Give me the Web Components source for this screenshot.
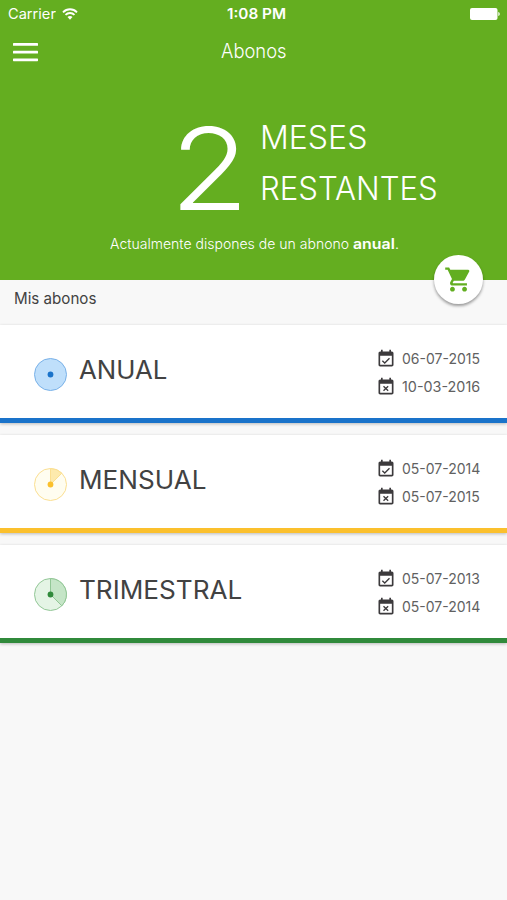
<!DOCTYPE html>
<html lang="es">
<head>
<meta charset="utf-8">
<title>Abonos</title>
<style>
html, body {
  margin: 0;
  height: 100%;
  background: #f8f8f8;
}
</style>
</head>
<body>
<abonos-page></abonos-page>
<script>
// Text stretched horizontally to a fixed width (the brand face is extended)
class WideText extends HTMLElement {
  constructor() {
    super();
    this.attachShadow({ mode: "open" }).innerHTML = `
<style>
:host {
  display: block;
  flex: none;
  white-space: nowrap;
}
span {
  display: inline-block;
  transform-origin: 0 50%;
}
</style>
<span><slot></slot></span>`;
  }
  connectedCallback() {
    const width = Number(this.getAttribute("width"));
    const span = this.shadowRoot.querySelector("span");
    this.style.width = width + "px";
    span.style.transform = `scaleX(${width / span.offsetWidth})`;
  }
}

class StatusBar extends HTMLElement {
  constructor() {
    super();
    this.attachShadow({ mode: "open" }).innerHTML = `
<style>
:host {
  box-sizing: border-box;
  display: grid;
  grid-template-columns: 1fr auto 1fr;
  align-items: center;
  height: 27px;
  padding: 0 7px 0 8px;
  font-size: 14px;
  line-height: 27px;
}
.left {
  display: flex;
  align-items: center;
  gap: 6px;
}
.time {
  margin-left: 4px;
  font-weight: 600;
}
.battery {
  justify-self: end;
}
</style>
<div class="left">
  <wide-text width="48">Carrier</wide-text>
  <svg width="16" height="12" viewBox="0 0 16 12" fill="none" stroke="#fff" stroke-width="1.9">
    <path d="M1 4.3C5 .3 11 .3 15 4.3"></path>
    <path d="M3.5 6.8C6 4.3 10 4.3 12.5 6.8"></path>
    <path d="M8 11.7L5.5 9.1C6.9 7.7 9.1 7.7 10.5 9.1Z" fill="#fff" stroke="none"></path>
  </svg>
</div>
<wide-text class="time" width="59">1:08 PM</wide-text>
<svg class="battery" width="30" height="12" viewBox="0 0 30 12" fill="#fff">
  <rect x="0" y="0" width="27.5" height="12" rx="2"></rect>
  <path d="M28.3 4C30.2 4.4 30.2 7.6 28.3 8Z"></path>
</svg>`;
  }
}

class NavBar extends HTMLElement {
  constructor() {
    super();
    this.attachShadow({ mode: "open" }).innerHTML = `
<style>
:host {
  box-sizing: border-box;
  display: grid;
  grid-template-columns: 1fr auto 1fr;
  align-items: center;
  height: 48px;
  padding: 0 13px;
  font-size: 19.5px;
  font-weight: 350;
  line-height: 47px;
}
svg {
  margin-top: 3px;
}
</style>
<svg width="25" height="19" viewBox="0 0 25 19" fill="#fff">
  <rect y="0" width="25" height="2.8" rx=".6"></rect>
  <rect y="7.7" width="25" height="2.8" rx=".6"></rect>
  <rect y="15.4" width="25" height="2.8" rx=".6"></rect>
</svg>
<wide-text width="66"><slot></slot></wide-text>`;
  }
}

class RemainingSummary extends HTMLElement {
  constructor() {
    super();
    this.attachShadow({ mode: "open" }).innerHTML = `
<style>
:host {
  display: block;
}
.count {
  display: flex;
  align-items: center;
  gap: 11px;
  height: 102px;
  padding: 37px 0 0 170px;
}
.number {
  font-size: 114px;
  font-weight: 360;
  line-height: 102px;
  margin-top: 11px;
}
.unit {
  font-size: 32px;
  font-weight: 320;
  line-height: 51px;
}
.note {
  display: flex;
  padding: 19px 0 0 110px;
  font-size: 14.5px;
  font-weight: 300;
  line-height: 22px;
}
.note b {
  font-weight: 600;
}
</style>
<div class="count">
  <wide-text class="number" width="79">2</wide-text>
  <div class="unit">
    <wide-text width="107">MESES</wide-text>
    <wide-text width="178">RESTANTES</wide-text>
  </div>
</div>
<div class="note">
  <wide-text width="243">Actualmente dispones de un abnono&nbsp;</wide-text>
  <wide-text width="46"><b>anual</b>.</wide-text>
</div>`;
  }
}

class CartButton extends HTMLElement {
  constructor() {
    super();
    this.attachShadow({ mode: "open" }).innerHTML = `
<style>
:host {
  display: flex;
  align-items: center;
  justify-content: center;
  width: 49px;
  height: 49px;
  border-radius: 50%;
  background: #fff;
  box-shadow: 0 2px 3px rgba(0, 0, 0, .38);
}
svg {
  margin-right: 1px;
}
</style>
<svg width="29" height="29" viewBox="0 0 24 24" fill="#62ae20">
  <path d="M7 18c-1.1 0-1.99.9-1.99 2S5.9 22 7 22s2-.9 2-2-.9-2-2-2zM1 2v2h2l3.6 7.59-1.35 2.45c-.16.28-.25.61-.25.96 0 1.1.9 2 2 2h12v-2H7.42c-.14 0-.25-.11-.25-.25l.03-.12.9-1.63h7.45c.75 0 1.41-.41 1.75-1.03l3.58-6.49A1 1 0 0 0 20 4H5.21l-.94-2H1zm16 16c-1.1 0-1.99.9-1.99 2s.89 2 1.99 2 2-.9 2-2-.9-2-2-2z"></path>
</svg>`;
  }
}

class DateRow extends HTMLElement {
  constructor() {
    super();
    const marks = {
      start: "M7.6 14l2.9 2.9 5.7-5.7",
      end: "M9 11l5.6 5.6M14.6 11l-5.6 5.6"
    };
    this.attachShadow({ mode: "open" }).innerHTML = `
<style>
:host {
  display: flex;
  align-items: center;
  gap: 6px;
  height: 28px;
  color: #616161;
  font-size: 14px;
  line-height: 28px;
}
</style>
<svg width="20" height="20" viewBox="0 0 24 24">
  <path fill="#3c3a3c" d="M19 3h-1V1h-2v2H8V1H6v2H5c-1.1 0-2 .9-2 2v14c0 1.1.9 2 2 2h14c1.1 0 2-.9 2-2V5c0-1.1-.9-2-2-2zm0 16H5V8h14v11z"></path>
  <path fill="none" stroke="#3c3a3c" stroke-width="1.6" d="${marks[this.getAttribute("type")]}"></path>
</svg>
<wide-text width="78"><slot></slot></wide-text>`;
  }
}

class PassCard extends HTMLElement {
  constructor() {
    super();
    this.attachShadow({ mode: "open" }).innerHTML = `
<style>
:host {
  box-sizing: border-box;
  display: flex;
  align-items: center;
  height: 98px;
  padding: 0 27px 0 33px;
  border-bottom: 5px solid var(--accent);
  background: #fff;
  box-shadow: 0 1px 3px rgba(0, 0, 0, .25);
}
.dial {
  margin-top: 5px;
}
.name {
  margin: 0 auto 4px 11px;
  color: #424242;
  font-size: 25.5px;
  line-height: 36px;
}
.dates {
  margin-top: 2px;
}
</style>
<svg class="dial" width="35" height="35" viewBox="-17.5 -17.5 35 35">
  <circle r="16" fill="var(--dial)" stroke="var(--ring)"></circle>
  <path d="${this.getAttribute("slice") || ""}" fill="var(--slice)" stroke="var(--ring)"></path>
  <circle r="2.9" fill="var(--accent)"></circle>
</svg>
<wide-text class="name" width="${this.getAttribute("name-width")}"><slot></slot></wide-text>
<div class="dates">
  <date-row type="start">${this.getAttribute("from")}</date-row>
  <date-row type="end">${this.getAttribute("to")}</date-row>
</div>`;
  }
}

class AbonosPage extends HTMLElement {
  constructor() {
    super();
    this.attachShadow({ mode: "open" }).innerHTML = `
<style>
:host {
  display: block;
  min-height: 900px;
  background: #f8f8f8;
  font-family: Inter, "Liberation Sans", sans-serif;
  overflow: hidden;
}
header {
  position: relative;
  height: 280px;
  background: #64ae20;
  color: #fff;
}
/* floats over the lower edge of the header */
cart-button {
  position: absolute;
  right: 24px;
  bottom: -24px;
}
h2 {
  box-sizing: border-box;
  height: 45px;
  margin: 0;
  padding: 7px 14px 0;
  color: #424242;
  font-size: 15.5px;
  font-weight: 400;
  line-height: 24px;
}
main {
  display: grid;
  gap: 12px;
}
.year {
  --accent: #1a73ca;
  --dial: #bfdffb;
  --ring: #79b1e8;
}
.month {
  --accent: #fbc02d;
  --dial: #fffdf0;
  --ring: #fbdf91;
  --slice: #fdeaad;
}
.quarter {
  --accent: #308a3b;
  --dial: #e4f4e5;
  --ring: #92c796;
  --slice: #c5e5c7;
}
</style>
<header>
  <status-bar></status-bar>
  <nav-bar>Abonos</nav-bar>
  <remaining-summary></remaining-summary>
  <cart-button></cart-button>
</header>
<h2><wide-text width="82">Mis abonos</wide-text></h2>
<main>
  <pass-card class="year" name-width="88" from="06-07-2015" to="10-03-2016">ANUAL</pass-card>
  <pass-card class="month" name-width="127" from="05-07-2014" to="05-07-2015" slice="M0 0V-16A16 16 0 0 1 11.3 -11.3Z">MENSUAL</pass-card>
  <pass-card class="quarter" name-width="163" from="05-07-2013" to="05-07-2014" slice="M0 0V-16A16 16 0 0 1 11.3 11.3Z">TRIMESTRAL</pass-card>
</main>`;
  }
}

customElements.define("abonos-page", AbonosPage);
customElements.define("status-bar", StatusBar);
customElements.define("nav-bar", NavBar);
customElements.define("remaining-summary", RemainingSummary);
customElements.define("cart-button", CartButton);
customElements.define("pass-card", PassCard);
customElements.define("date-row", DateRow);
customElements.define("wide-text", WideText);
</script>
</body>
</html>
